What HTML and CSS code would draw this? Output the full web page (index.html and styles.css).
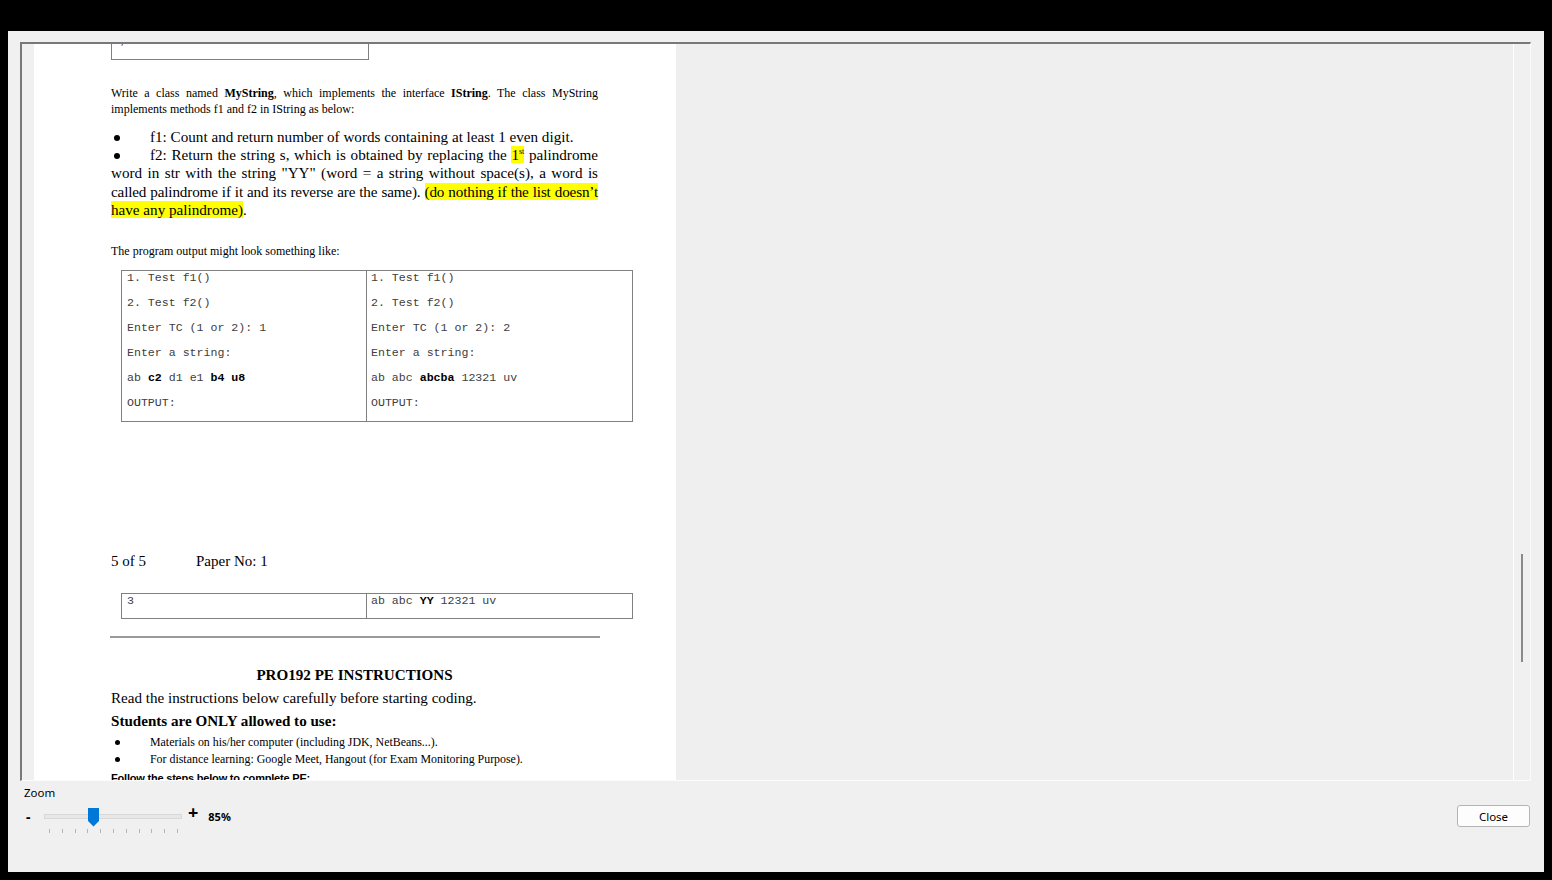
FILE: index.html
```html
<!DOCTYPE html>
<html>
<head>
<meta charset="utf-8">
<title>PDF Viewer</title>
<link rel="stylesheet" href="styles.css">
</head>
<body>
<div class="window">
  <div class="viewer">
    <div class="gutter"></div>
    <div class="page">
      <div class="topbox"><span class="tick">,</span></div>
      <p class="intro">
        <span class="jl">Write a class named <b>MyString</b>, which implements the interface <b>IString</b>. The class MyString</span>
        <span class="ln">implements methods f1 and f2 in IString as below:</span>
      </p>
      <div class="bullets">
        <span class="ln"><span class="dot"></span>f1: Count and return number of words containing at least 1 even digit.</span>
        <span class="jl"><span class="dot"></span>f2: Return the string s, which is obtained by replacing the <mark>1<sup>st</sup></mark> palindrome</span>
        <span class="jl">word in str with the string "YY" (word = a string without space(s), a word is</span>
        <span class="jl tight">called palindrome if it and its reverse are the same). <mark>(do nothing if the list doesn’t</mark></span>
        <span class="ln"><mark>have any palindrome)</mark>.</span>
      </div>
      <p class="small">The program output might look something like:</p>
      <div class="table">
        <div class="cell left">
          <div class="row">1. Test f1()</div>
          <div class="row">2. Test f2()</div>
          <div class="row">Enter TC (1 or 2): 1</div>
          <div class="row">Enter a string:</div>
          <div class="row">ab <b>c2</b> d1 e1 <b>b4 u8</b></div>
          <div class="row">OUTPUT:</div>
        </div>
        <div class="cell right">
          <div class="row">1. Test f1()</div>
          <div class="row">2. Test f2()</div>
          <div class="row">Enter TC (1 or 2): 2</div>
          <div class="row">Enter a string:</div>
          <div class="row">ab abc <b>abcba</b> 12321 uv</div>
          <div class="row">OUTPUT:</div>
        </div>
      </div>
      <div class="footer"><span class="pg">5 of 5</span><span>Paper No: 1</span></div>
      <div class="table table2">
        <div class="cell left"><div class="row">3</div></div>
        <div class="cell right"><div class="row">ab abc <b>YY</b> 12321 uv</div></div>
      </div>
      <div class="rule"></div>
      <h2 class="title">PRO192 PE INSTRUCTIONS</h2>
      <p class="big">Read the instructions below carefully before starting coding.</p>
      <p class="big strong">Students are ONLY allowed to use:</p>
      <ul class="mini">
        <li><span class="dot"></span>Materials on his/her computer (including JDK, NetBeans...).</li>
        <li><span class="dot"></span>For distance learning: Google Meet, Hangout (for Exam Monitoring Purpose).</li>
      </ul>
      <p class="follow">Follow the steps below to complete PE:</p>
    </div>
    <div class="canvas"></div>
    <div class="scrollbar"><div class="thumb"></div></div>
  </div>
  <div class="controls">
    <div class="zoomgroup">
      <div class="zoomlabel">Zoom</div>
      <div class="sliderrow">
        <span class="minus">-</span>
        <div class="slider">
          <div class="track"></div>
          <svg class="knob" width="11" height="19" viewBox="0 0 11 19"><path d="M0 0H11V13L5.5 18.5L0 13Z" fill="#0078d7"/></svg>
          <div class="ticks">
            <i></i><i></i><i></i><i></i><i></i><i></i><i></i><i></i><i></i><i></i><i></i>
          </div>
        </div>
        <span class="plus">+</span>
        <span class="pct">85%</span>
      </div>
    </div>
    <button class="close">Close</button>
  </div>
</div>
</body>
</html>
```
FILE: styles.css
```css
html, body {
  margin: 0;
  padding: 0;
}
body {
  background: #000;
  width: 1552px;
  height: 880px;
  overflow: hidden;
}
.window {
  margin: 31px 0 0 8px;
  width: 1536px;
  height: 841px;
  background: #f0f0f0;
  display: flex;
  flex-direction: column;
}
.viewer {
  margin: 11px 0 0 12px;
  width: 1511px;
  height: 739px;
  box-sizing: border-box;
  border-top: 2px solid #787878;
  border-left: 2px solid #787878;
  border-right: 1px solid #fbfbfb;
  border-bottom: 1px solid #fbfbfb;
  display: flex;
  overflow: hidden;
  background: #f0f0f0;
}
.gutter {
  width: 12px;
  flex: none;
}
.page {
  width: 642px;
  flex: none;
  background: #fff;
  box-sizing: border-box;
  padding-left: 77px;
  overflow: hidden;
  font-family: "Liberation Serif", "Times New Roman", serif;
  color: #000;
}
.canvas {
  flex: 1;
  background: #efefef;
  border-right: 1px solid #fff;
}
.scrollbar {
  width: 16px;
  flex: none;
}
.thumb {
  margin: 510px 0 0 7px;
  width: 2px;
  height: 108px;
  background: #8a8a8a;
}

/* document */
.topbox {
  width: 258px;
  height: 16px;
  box-sizing: border-box;
  border: 1px solid #808080;
  border-top: none;
  position: relative;
  overflow: hidden;
}
.tick {
  position: absolute;
  left: 8px;
  top: -9px;
  font-family: "Liberation Mono", monospace;
  font-size: 11px;
  color: #555;
}
.jl {
  display: block;
  text-align: justify;
  text-align-last: justify;
}
.ln {
  display: block;
}
.tight {
  white-space: nowrap;
  word-spacing: -1.5px;
  letter-spacing: -0.15px;
}
.intro {
  margin: 25px 0 0;
  width: 487px;
  font-size: 12px;
  line-height: 16px;
}
.bullets {
  margin-top: 11px;
  width: 487px;
  font-size: 15.15px;
  line-height: 18.2px;
}
.dot {
  display: inline-block;
  width: 39px;
  position: relative;
  height: 8px;
  letter-spacing: 0;
}
.dot::before {
  content: "";
  position: absolute;
  left: 3px;
  top: 1px;
  width: 6px;
  height: 6px;
  border-radius: 50%;
  background: #000;
}
mark {
  background: #ffff00;
  color: #000;
}
sup {
  font-size: 8px;
  line-height: 0;
  vertical-align: 6px;
}
.small {
  margin: 24px 0 0;
  font-size: 12px;
  line-height: 16px;
}
.table {
  margin: 11px 0 0 10px;
  width: 510px;
  border: 1px solid #808080;
  display: flex;
  font-family: "Liberation Mono", "Courier New", monospace;
  font-size: 11.6px;
  color: #404040;
}
.table b {
  color: #000;
}
.cell {
  box-sizing: border-box;
}
.cell.left {
  width: 245px;
  border-right: 1px solid #808080;
  padding-left: 5px;
}
.cell.right {
  flex: 1;
  padding-left: 4px;
}
.row {
  height: 25px;
  line-height: 13px;
}
.table2 {
  margin-top: 23px;
}
.table2 .row {
  height: 24px;
}
.footer {
  margin-top: 130px;
  font-size: 15px;
  line-height: 18px;
  display: flex;
}
.pg {
  width: 85px;
}
.rule {
  margin: 17px 0 0 -1px;
  width: 490px;
  height: 2px;
  background: #9a9a9a;
}
.title {
  margin: 26px 0 0;
  width: 487px;
  text-align: center;
  font-size: 15.1px;
  line-height: 23px;
  font-weight: bold;
}
.big {
  margin: 0;
  font-size: 15.1px;
  line-height: 23px;
}
.strong {
  font-weight: bold;
}
.mini {
  list-style: none;
  margin: 1px 0 0;
  padding: 0;
  font-size: 11.9px;
  line-height: 17px;
}
.mini .dot {
  height: 6px;
}
.mini .dot::before {
  left: 4px;
  top: 0;
  width: 5px;
  height: 5px;
}
.follow {
  margin: 2px 0 0;
  font-family: "Liberation Sans", Arial, sans-serif;
  font-weight: bold;
  font-size: 11px;
  letter-spacing: -0.2px;
  line-height: 17px;
}

/* controls */
.controls {
  flex: 1;
  display: flex;
  justify-content: space-between;
  font-family: "Noto Sans", "Open Sans", sans-serif;
  color: #000;
}
.zoomgroup {
  padding-left: 16px;
}
.zoomlabel {
  margin-top: 4px;
  font-size: 11.5px;
  line-height: 16px;
}
.sliderrow {
  margin-top: 7px;
  display: flex;
  align-items: flex-start;
}
.minus {
  margin-left: 2px;
  width: 18px;
  font-size: 14px;
  font-weight: bold;
  line-height: 18px;
}
.slider {
  position: relative;
  width: 138px;
  height: 28px;
}
.track {
  margin-top: 6px;
  height: 3px;
  background: #e7e7e7;
  border: 1px solid #d8d8d8;
}
.knob {
  position: absolute;
  left: 44px;
  top: 0;
}
.ticks {
  margin: 10px 0 0 5px;
  width: 129px;
  display: flex;
  justify-content: space-between;
}
.ticks i {
  display: block;
  width: 1px;
  height: 4px;
  background: #b5b5b5;
}
.plus {
  margin-left: 6px;
  font-size: 18px;
  font-weight: bold;
  line-height: 16px;
  margin-top: -4px;
}
.pct {
  margin-left: 10px;
  font-size: 11px;
  font-weight: bold;
  line-height: 18px;
}
.close {
  margin: 24px 14px 0 0;
  width: 73px;
  height: 22px;
  background: #fdfdfd;
  border: 1px solid #b4b4b4;
  border-radius: 3px;
  font-family: "Noto Sans", "Open Sans", sans-serif;
  font-size: 11.5px;
  color: #000;
  padding: 0;
}
```
